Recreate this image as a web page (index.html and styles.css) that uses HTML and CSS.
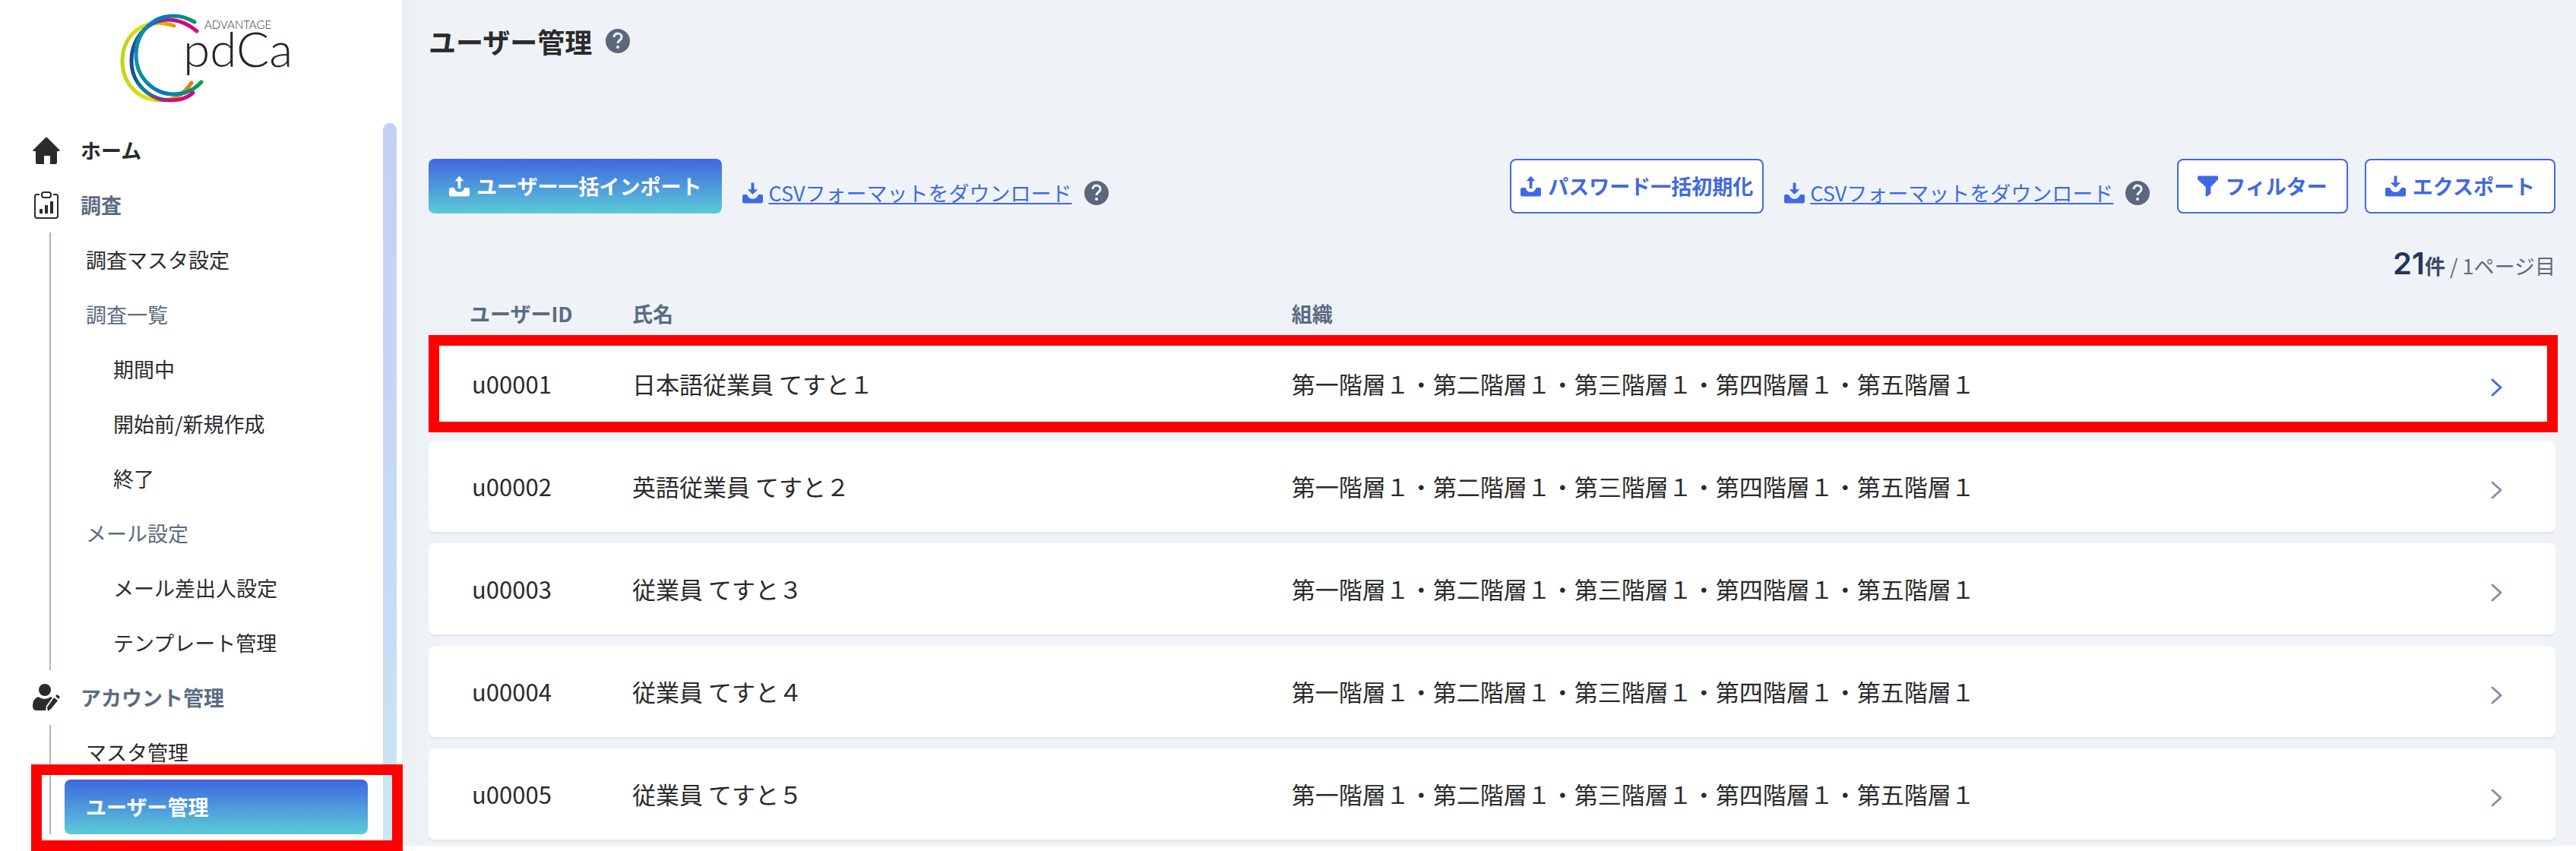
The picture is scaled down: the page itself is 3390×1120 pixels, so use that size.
FILE: index.html
```html
<!DOCTYPE html>
<html lang="ja">
<head>
  <meta charset="UTF-8">
  <meta name="viewport" content="width=device-width, initial-scale=1.0">
  <title>ユーザー管理</title>
  <link rel="stylesheet" href="styles.css">
</head>
<body>
  <!-- 共通アイコン -->
  <svg class="sprite" aria-hidden="true">
    <symbol id="icon-upload" viewBox="0 0 28 28">
      <path d="M14 0l6 7h-4v10h-4V7H8z"/>
      <path d="M2 16h5c1 4 3 6 7 6s6-2 7-6h5c1 0 2 1 2 2v8c0 1-1 2-2 2H2c-1 0-2-1-2-2v-8c0-1 1-2 2-2z"/>
    </symbol>
    <symbol id="icon-download" viewBox="0 0 28 28">
      <path d="M12 0h4v9h5l-7 7-7-7h5z"/>
      <path d="M2 16h4c2 4 4 6 8 6s6-2 8-6h4c1 0 2 1 2 2v8c0 1-1 2-2 2H2c-1 0-2-1-2-2v-8c0-1 1-2 2-2z"/>
    </symbol>
    <symbol id="icon-filter" viewBox="0 0 28 28">
      <path d="M1 0h26c1 0 1 1 1 1v4L18 15v9l-5 4h-2V15L0 5V1s0-1 1-1z"/>
    </symbol>
    <symbol id="icon-help" viewBox="0 0 32 32">
      <circle cx="16" cy="16" r="16" fill="#5b677a"/>
      <path d="M11 11c0-7 11-6 10 0 0 4-5 4-5 8" fill="none" stroke="#eff3f7" stroke-width="3"/>
      <circle cx="16" cy="24" r="2" fill="#eff3f7"/>
    </symbol>
    <symbol id="icon-arrow" viewBox="0 0 16 24">
      <path d="M2 2l11 10L2 22" fill="none" stroke="currentColor" stroke-width="3" stroke-linecap="round" stroke-linejoin="round"/>
    </symbol>
  </svg>

  <div class="layout">
    <aside class="sidebar">
      <a class="logo" href="#">
        <svg width="232" height="124" viewBox="156 14 232 124" role="img" aria-label="ADVANTAGE pdCa">
          <defs>
            <linearGradient id="g-yellow" gradientUnits="userSpaceOnUse" x1="160" y1="0" x2="252" y2="0">
              <stop offset="0" stop-color="#bcd41c"/>
              <stop offset=".4" stop-color="#f2e100"/>
              <stop offset=".6" stop-color="#f0a800"/>
              <stop offset="1" stop-color="#e37a10"/>
            </linearGradient>
            <linearGradient id="g-magenta" gradientUnits="userSpaceOnUse" x1="172" y1="0" x2="258" y2="0">
              <stop offset="0" stop-color="#15489b"/>
              <stop offset=".2" stop-color="#078a92"/>
              <stop offset=".4" stop-color="#6f3f98"/>
              <stop offset=".65" stop-color="#b9108a"/>
              <stop offset="1" stop-color="#e5007a"/>
            </linearGradient>
            <linearGradient id="g-green" gradientUnits="userSpaceOnUse" x1="178" y1="0" x2="266" y2="0">
              <stop offset="0" stop-color="#128fa5"/>
              <stop offset=".4" stop-color="#0078c4"/>
              <stop offset=".65" stop-color="#07889a"/>
              <stop offset="1" stop-color="#00a33f"/>
            </linearGradient>
          </defs>
          <g fill="none" stroke-width="5" stroke-linecap="round">
            <path d="M229 34C190 21 161 46 161 80C161 110 182 132 211 132C229 132 241 125 252 109" stroke="url(#g-yellow)"/>
            <path d="M259 41C218 7 173 36 173 80C173 111 198 132 224 132C238 132 248 128 254 122" stroke="url(#g-magenta)"/>
            <path d="M256 29C220 8 180 30 179 72C179 103 203 124 229 124C244 124 257 117 265 108" stroke="url(#g-green)"/>
          </g>
          <text class="logo-small" x="269" y="38">ADVANTAGE</text>
          <text class="logo-large" x="241" y="88">pdCa</text>
        </svg>
      </a>
      <div class="nav-area">
        <nav>
          <ul class="menu">
            <li>
              <a class="menu-link menu-top menu-home" href="#">
                <svg class="menu-icon" viewBox="0 0 36 36" fill="#2b2b2b">
                  <path d="M17 1q1-1 2 0l16 16q2 2-1 2h-2v15q0 2-2 2h-7V25h-8v11H6q-2 0-2-2V19H2q-3 0-1-2z"/>
                </svg>
                ホーム
              </a>
            </li>
            <li>
              <a class="menu-link menu-top" href="#">
                <svg class="menu-icon" viewBox="0 0 36 36" fill="none" stroke="#2b2b2b" stroke-width="2">
                  <path d="M9 4H5Q3 4 3 7v25q0 3 3 3h24q3 0 3-3V7q0-3-2-3h-4"/>
                  <rect x="12" y="1" width="12" height="7" rx="3"/>
                  <path d="M11 23v6M18 18v11M25 13v16" stroke-width="4"/>
                </svg>
                調査
              </a>
              <ul class="submenu">
                <li><a class="menu-link" href="#">調査マスタ設定</a></li>
                <li>
                  <span class="menu-link menu-group">調査一覧</span>
                  <ul class="submenu-inner">
                    <li><a class="menu-link" href="#">期間中</a></li>
                    <li><a class="menu-link" href="#">開始前/新規作成</a></li>
                    <li><a class="menu-link" href="#">終了</a></li>
                  </ul>
                </li>
                <li>
                  <span class="menu-link menu-group">メール設定</span>
                  <ul class="submenu-inner">
                    <li><a class="menu-link" href="#">メール差出人設定</a></li>
                    <li><a class="menu-link" href="#">テンプレート管理</a></li>
                  </ul>
                </li>
              </ul>
            </li>
            <li>
              <a class="menu-link menu-top" href="#">
                <svg class="menu-icon" viewBox="0 0 36 36" fill="#2b2b2b">
                  <ellipse cx="16" cy="8" rx="8" ry="8"/>
                  <path d="M7 17q9 6 17 0l2 1-8 11-1 6H5q-5 0-5-6 0-9 7-12z"/>
                  <path d="M28 18l5 4-9 11-4 3-1-5z"/>
                  <path d="M30 16l2-2 4 3-2 3z"/>
                </svg>
                アカウント管理
              </a>
              <ul class="submenu">
                <li><a class="menu-link" href="#">マスタ管理</a></li>
                <li class="menu-active"><a class="menu-link" href="#">ユーザー管理</a></li>
              </ul>
            </li>
          </ul>
        </nav>
        <div class="scroll-thumb"></div>
      </div>
    </aside>

    <main class="content">
      <div class="page-title">
        <h1>ユーザー管理</h1>
        <svg class="help"><use href="#icon-help"/></svg>
      </div>

      <div class="toolbar">
        <button class="btn btn-primary" type="button"><svg class="icon"><use href="#icon-upload"/></svg>ユーザー一括インポート</button>
        <div class="csv">
          <svg class="icon"><use href="#icon-download"/></svg>
          <a href="#">CSVフォーマットをダウンロード</a>
          <svg class="help"><use href="#icon-help"/></svg>
        </div>
        <button class="btn btn-password" type="button"><svg class="icon"><use href="#icon-upload"/></svg>パスワード一括初期化</button>
        <div class="csv">
          <svg class="icon"><use href="#icon-download"/></svg>
          <a href="#">CSVフォーマットをダウンロード</a>
          <svg class="help"><use href="#icon-help"/></svg>
        </div>
        <button class="btn btn-filter" type="button"><svg class="icon"><use href="#icon-filter"/></svg>フィルター</button>
        <button class="btn btn-export" type="button"><svg class="icon"><use href="#icon-download"/></svg>エクスポート</button>
      </div>

      <p class="count"><strong><span class="count-number">21</span>件</strong> / 1ページ目</p>

      <table class="users">
        <thead>
          <tr>
            <th class="col-id">ユーザーID</th>
            <th class="col-name">氏名</th>
            <th>組織</th>
            <th class="col-arrow"></th>
          </tr>
        </thead>
        <tbody>
          <tr class="marked">
            <td>u00001</td>
            <td>日本語従業員 てすと１</td>
            <td>第一階層１・第二階層１・第三階層１・第四階層１・第五階層１</td>
            <td><svg class="arrow"><use href="#icon-arrow"/></svg></td>
          </tr>
          <tr>
            <td>u00002</td>
            <td>英語従業員 てすと２</td>
            <td>第一階層１・第二階層１・第三階層１・第四階層１・第五階層１</td>
            <td><svg class="arrow"><use href="#icon-arrow"/></svg></td>
          </tr>
          <tr>
            <td>u00003</td>
            <td>従業員 てすと３</td>
            <td>第一階層１・第二階層１・第三階層１・第四階層１・第五階層１</td>
            <td><svg class="arrow"><use href="#icon-arrow"/></svg></td>
          </tr>
          <tr>
            <td>u00004</td>
            <td>従業員 てすと４</td>
            <td>第一階層１・第二階層１・第三階層１・第四階層１・第五階層１</td>
            <td><svg class="arrow"><use href="#icon-arrow"/></svg></td>
          </tr>
          <tr>
            <td>u00005</td>
            <td>従業員 てすと５</td>
            <td>第一階層１・第二階層１・第三階層１・第四階層１・第五階層１</td>
            <td><svg class="arrow"><use href="#icon-arrow"/></svg></td>
          </tr>
        </tbody>
      </table>
    </main>
  </div>
</body>
</html>
```
FILE: styles.css
```css
* {
  box-sizing: border-box;
}
body {
  margin: 0;
  min-height: 100vh;
  padding-bottom: 7px;
  font-family: "Noto Sans CJK JP", sans-serif;
  font-size: 27px;
  line-height: 36px;
  color: #2b2b2b;
  background: #fff;
}
ul {
  list-style: none;
  margin: 0;
  padding: 0;
}
a {
  color: inherit;
  text-decoration: none;
}
.sprite {
  display: none;
}
.layout {
  display: flex;
  min-height: calc(100vh - 7px);
}

/* サイドバー */
.sidebar {
  flex: 0 0 529px;
  display: flex;
  flex-direction: column;
  padding-right: 7px;
  background: #fff;
}
.logo {
  height: 162px;
  padding: 14px 0 0 156px;
}
.logo svg {
  display: block;
}
.logo-small {
  font-family: Lato, sans-serif;
  font-size: 15px;
  font-weight: 300;
  fill: #3e3535;
}
.logo-large {
  font-family: Lato, sans-serif;
  font-size: 64px;
  font-weight: 300;
  fill: #2a2020;
}
.nav-area {
  flex: 1;
  display: flex;
  justify-content: space-between;
}
nav {
  width: 484px;
}
.scroll-thumb {
  width: 18px;
  border-radius: 9px 9px 0 0;
  background: linear-gradient(#c5cff5, #c6dbf5 60%, #c9e8f1);
}
.menu-link {
  display: flex;
  align-items: center;
  height: 72px;
}
.menu-top {
  gap: 27px;
  padding-left: 43px;
  font-weight: bold;
  color: #5b6b82;
}
.menu-home {
  color: #2b2b2b;
}
.menu-icon {
  width: 36px;
  height: 36px;
}
.menu-group {
  color: #5b6b82;
}
.submenu {
  margin-left: 65px;
  padding-left: 18px;
  border-left: 2px solid #adb5c3;
}
.submenu .menu-link {
  padding-left: 28px;
}
.submenu-inner .menu-link {
  padding-left: 64px;
}
.menu-active {
  position: relative;
}
.menu-active .menu-link {
  border-radius: 8px;
  background: linear-gradient(#4066e0, #5bcbd7);
  color: #fff;
  font-weight: bold;
}
.menu-active::after {
  content: "";
  position: absolute;
  inset: -20px -46px -22px -44px;
  border: 14px solid #f00;
}

/* メイン */
.content {
  flex: 1;
  min-width: 0;
  padding: 29px 27px 0 35px;
  background: linear-gradient(to right, #e9f1f4, #eff3f7 36px);
}
.page-title {
  display: flex;
  align-items: center;
  gap: 18px;
  height: 50px;
}
h1 {
  margin: 0;
  font-size: 36px;
  line-height: 50px;
}
.help {
  flex: none;
  width: 32px;
  height: 32px;
}
.icon {
  flex: none;
  width: 27px;
  height: 28px;
  fill: currentColor;
}
.toolbar {
  display: flex;
  align-items: center;
  margin-top: 130px;
}
.btn {
  display: flex;
  align-items: center;
  justify-content: center;
  gap: 9px;
  height: 72px;
  padding: 0 25px;
  border: 2px solid #4169e1;
  border-radius: 8px;
  background: #fff;
  color: #4169e1;
  font: inherit;
  font-weight: bold;
  white-space: nowrap;
}
.btn-primary {
  padding: 0 27px;
  border: none;
  background: linear-gradient(#4066e0, #5bcbd7);
  color: #fff;
}
.btn-password {
  margin-left: auto;
  padding: 0 12px;
}
.btn-filter {
  margin-left: 36px;
}
.btn-export {
  margin-left: 22px;
}
.csv {
  display: flex;
  align-items: center;
  margin: 18px 0 0 27px;
  color: #4169e1;
  white-space: nowrap;
}
.csv a {
  margin: 0 16px 0 7px;
  text-decoration: underline;
}
.count {
  height: 100px;
  margin: 0;
  padding-top: 48px;
  text-align: right;
  color: #5b6b82;
}
.count strong {
  color: #3b4c66;
}
.count-number {
  font-family: Inter, sans-serif;
  font-size: 40px;
  font-weight: 600;
  color: #22365a;
}

/* ユーザー一覧 */
.users {
  width: 100%;
  margin-bottom: -7px;
  table-layout: fixed;
  border-collapse: separate;
  border-spacing: 0 15px;
}
.users th {
  height: 34px;
  padding: 0;
  text-align: left;
  line-height: 34px;
  color: #5b6b82;
}
.users td {
  height: 120px;
  padding: 0;
  font-size: 31px;
  background: #fff;
  box-shadow: 0 3px 0 #e3e9ee;
}
.users th:first-child {
  padding-left: 54px;
}
.users td:first-child {
  padding-left: 57px;
  border-radius: 8px 0 0 8px;
}
.users td:last-child {
  border-radius: 0 8px 8px 0;
}
.col-id {
  width: 268px;
}
.col-name {
  width: 31%;
}
.col-arrow {
  width: 85px;
}
.arrow {
  display: block;
  width: 16px;
  height: 24px;
  margin-top: 10px;
  color: #8690a3;
}
.marked {
  position: relative;
}
.marked .arrow {
  color: #4169e1;
}
.marked td:first-child::after {
  content: "";
  position: absolute;
  inset: -4px -3px -4px 0;
  border: 14px solid #f00;
}
```
